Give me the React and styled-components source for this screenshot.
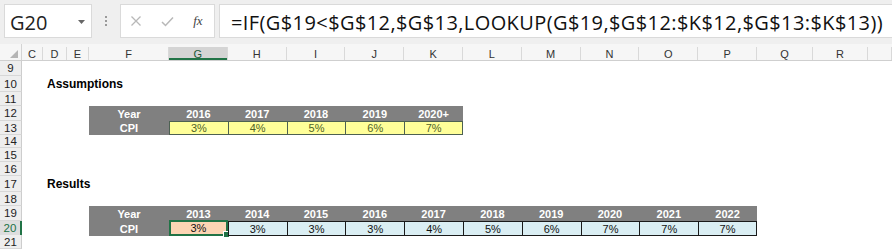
import React from "react";
import styled, { createGlobalStyle } from "styled-components";

const GlobalStyle = createGlobalStyle`
  html, body {
    margin: 0;
    padding: 0;
    background: #ffffff;
    overflow: hidden;
  }
`;

const GREEN = "#217346";
const GRID = "22px 21px 24px 22px 80px repeat(10, 58.8px) 56px 55px 1fr";
const COLS = ["C", "D", "E", "F", "G", "H", "I", "J", "K", "L", "M", "N", "O", "P", "Q", "R", "S"];

const Window = styled.div`
  width: 892px;
  height: 249px;
  overflow: hidden;
  font-family: "Liberation Sans", Arial, sans-serif;
  background: #fff;
`;

/* formula bar */
const Toolbar = styled.div`
  display: flex;
  align-items: center;
  gap: 4px;
  height: 44px;
  padding: 0 0 2px 4px;
  box-sizing: border-box;
  background: #efefef;
`;

const NameBox = styled.div`
  display: flex;
  align-items: center;
  justify-content: space-between;
  width: 88px;
  height: 34px;
  box-sizing: border-box;
  padding: 2px 6px 0 5px;
  background: #fff;
  border: 1px solid #dadada;
  font-family: "Open Sans", "Noto Sans", sans-serif;
  font-size: 20px;
  color: #222;
`;

const Grip = styled.div`
  display: flex;
  flex-direction: column;
  gap: 2px;
  width: 20px;
  align-items: center;

  span {
    width: 2px;
    height: 2px;
    background: #9a9a9a;
  }
`;

const FxBox = styled.div`
  display: flex;
  align-items: center;
  justify-content: space-around;
  width: 95px;
  height: 34px;
  box-sizing: border-box;
  padding-right: 2px;
  background: #fff;
  border: 1px solid #dadada;
`;

const FxLabel = styled.span`
  font-family: "Liberation Serif", serif;
  font-style: italic;
  font-size: 13px;
  color: #444;
`;

const FormulaBox = styled.div`
  flex: 1;
  display: flex;
  align-items: center;
  height: 34px;
  box-sizing: border-box;
  padding: 2px 0 0 11px;
  background: #fff;
  border: 1px solid #dadada;
  border-right: none;
  font-family: "Open Sans", "Noto Sans", sans-serif;
  font-size: 20px;
  letter-spacing: 0.4px;
  color: #111;
  white-space: nowrap;
  overflow: hidden;
`;

/* sheet */
const Row = styled.div`
  display: grid;
  grid-template-columns: ${GRID};
  height: ${(p) => p.$h}px;
`;

const HeaderRow = styled(Row)`
  background: #f6f6f6;
  border-bottom: 1px solid #cfcfcf;
  box-sizing: border-box;
`;

const Corner = styled.div`
  display: flex;
  align-items: flex-end;
  justify-content: flex-end;
  padding: 0 3px 2px 0;
  border-right: 1px solid #d4d4d4;
`;

const ColHead = styled.div`
  display: flex;
  align-items: center;
  justify-content: center;
  font-size: 11px;
  color: ${(p) => (p.$active ? "#1e5a3a" : "#333")};
  background: ${(p) => (p.$active ? "#d4d4d4" : "transparent")};
  border-right: 1px solid #d9d9d9;
  box-shadow: ${(p) => (p.$active ? `inset 0 -2px 0 ${GREEN}` : "none")};
  margin-top: 3px;
`;

const RowHead = styled.div`
  display: flex;
  align-items: center;
  justify-content: center;
  box-sizing: border-box;
  font-size: 11.5px;
  color: ${(p) => (p.$active ? GREEN : "#222")};
  background: ${(p) => (p.$active ? "#dedede" : "#eeeeee")};
  border-bottom: 1px solid #d7d7d7;
  border-right: ${(p) => (p.$active ? `2px solid ${GREEN}` : "1px solid #cdcdcd")};
`;

const CELL_BG = {
  head: "#808080",
  yellow: "#ffff99",
  blue: "#daeef3",
  selected: "#fcd5b4",
};

const CELL_BORDER = {
  yellow: "#4d6152",
  blue: "#1a1a1a",
};

const Cell = styled.div`
  position: relative;
  display: flex;
  align-items: center;
  justify-content: center;
  box-sizing: border-box;
  font-size: 11px;
  white-space: nowrap;
  background: ${(p) => CELL_BG[p.$kind] || "transparent"};
  color: ${(p) => (p.$kind === "head" ? "#fff" : p.$kind === "yellow" ? "#4f6228" : "#111")};
  font-weight: ${(p) => (p.$kind === "head" ? "bold" : "normal")};
  ${(p) =>
    CELL_BORDER[p.$kind] &&
    `border: 1px solid ${CELL_BORDER[p.$kind]};
     border-right: ${p.$last ? `1px solid ${CELL_BORDER[p.$kind]}` : "none"};`}
  ${(p) => p.$kind === "selected" && `border: 2px solid ${GREEN}; margin: -1px 0 0 0;`}
`;

const Title = styled.div`
  display: flex;
  align-items: center;
  padding-left: 4px;
  font-size: 12px;
  font-weight: bold;
  color: #000;
  white-space: nowrap;
  overflow: visible;
`;

const FillHandle = styled.span`
  position: absolute;
  right: -4px;
  bottom: -4px;
  width: 5px;
  height: 5px;
  background: ${GREEN};
  border: 1px solid #fff;
`;

const YEARS_A = ["2016", "2017", "2018", "2019", "2020+"];
const CPI_A = ["3%", "4%", "5%", "6%", "7%"];
const YEARS_R = ["2013", "2014", "2015", "2016", "2017", "2018", "2019", "2020", "2021", "2022"];
const CPI_R = ["3%", "3%", "3%", "3%", "4%", "5%", "6%", "7%", "7%", "7%"];

const tableRow = (label, values, kind) => {
  const cells = { F: { text: label, kind: "head" } };
  values.forEach((v, i) => {
    const k = kind === "blue" && i === 0 ? "selected" : kind;
    cells[COLS[4 + i]] = { text: v, kind: k, last: i === values.length - 1 };
  });
  return cells;
};

const ROWS = [
  { n: 9, h: 15 },
  { n: 10, h: 16, title: "Assumptions" },
  { n: 11, h: 14 },
  { n: 12, h: 15, cells: tableRow("Year", YEARS_A, "head") },
  { n: 13, h: 14, cells: tableRow("CPI", CPI_A, "yellow") },
  { n: 14, h: 13 },
  { n: 15, h: 14 },
  { n: 16, h: 14 },
  { n: 17, h: 16, title: "Results" },
  { n: 18, h: 14 },
  { n: 19, h: 15, cells: tableRow("Year", YEARS_R, "head") },
  { n: 20, h: 14, cells: tableRow("CPI", CPI_R, "blue"), active: true },
  { n: 21, h: 14 },
];

const SheetRow = ({ row }) => {
  const items = [];
  COLS.forEach((c) => {
    if (row.title && c === "D") {
      items.push(<Title key={c}>{row.title}</Title>);
      return;
    }
    const cell = row.cells && row.cells[c];
    if (!cell) {
      items.push(<Cell key={c} />);
      return;
    }
    items.push(
      <Cell key={c} $kind={cell.kind} $last={cell.last}>
        {cell.text}
        {cell.kind === "selected" && <FillHandle />}
      </Cell>
    );
  });
  return (
    <Row $h={row.h}>
      <RowHead $active={row.active}>{row.n}</RowHead>
      {items}
    </Row>
  );
};

const Cross = () => (
  <svg width="12" height="12" viewBox="0 0 12 12">
    <path d="M1.5 1.5 L10.5 10.5 M10.5 1.5 L1.5 10.5" stroke="#b8b8b8" strokeWidth="1.3" fill="none" />
  </svg>
);

const Check = () => (
  <svg width="13" height="11" viewBox="0 0 13 11">
    <path d="M1 6 L4.5 9.5 L12 1.5" stroke="#b8b8b8" strokeWidth="1.5" fill="none" />
  </svg>
);

const App = () => {
  return (
    <Window>
      <GlobalStyle />
      <Toolbar>
        <NameBox>
          G20
          <svg width="7" height="4" viewBox="0 0 7 4">
            <path d="M0 0 L7 0 L3.5 4 Z" fill="#666" />
          </svg>
        </NameBox>
        <Grip>
          <span />
          <span />
          <span />
        </Grip>
        <FxBox>
          <Cross />
          <Check />
          <FxLabel>fx</FxLabel>
        </FxBox>
        <FormulaBox>=IF(G$19&lt;$G$12,$G$13,LOOKUP(G$19,$G$12:$K$12,$G$13:$K$13))</FormulaBox>
      </Toolbar>
      <HeaderRow $h={17}>
        <Corner>
          <svg width="8" height="8" viewBox="0 0 8 8">
            <path d="M8 0 L8 8 L0 8 Z" fill="#b5b5b5" />
          </svg>
        </Corner>
        {COLS.map((c) => (
          <ColHead key={c} $active={c === "G"}>
            {c === "S" ? "" : c}
          </ColHead>
        ))}
      </HeaderRow>
      {ROWS.map((r) => (
        <SheetRow key={r.n} row={r} />
      ))}
    </Window>
  );
};

export default App;
